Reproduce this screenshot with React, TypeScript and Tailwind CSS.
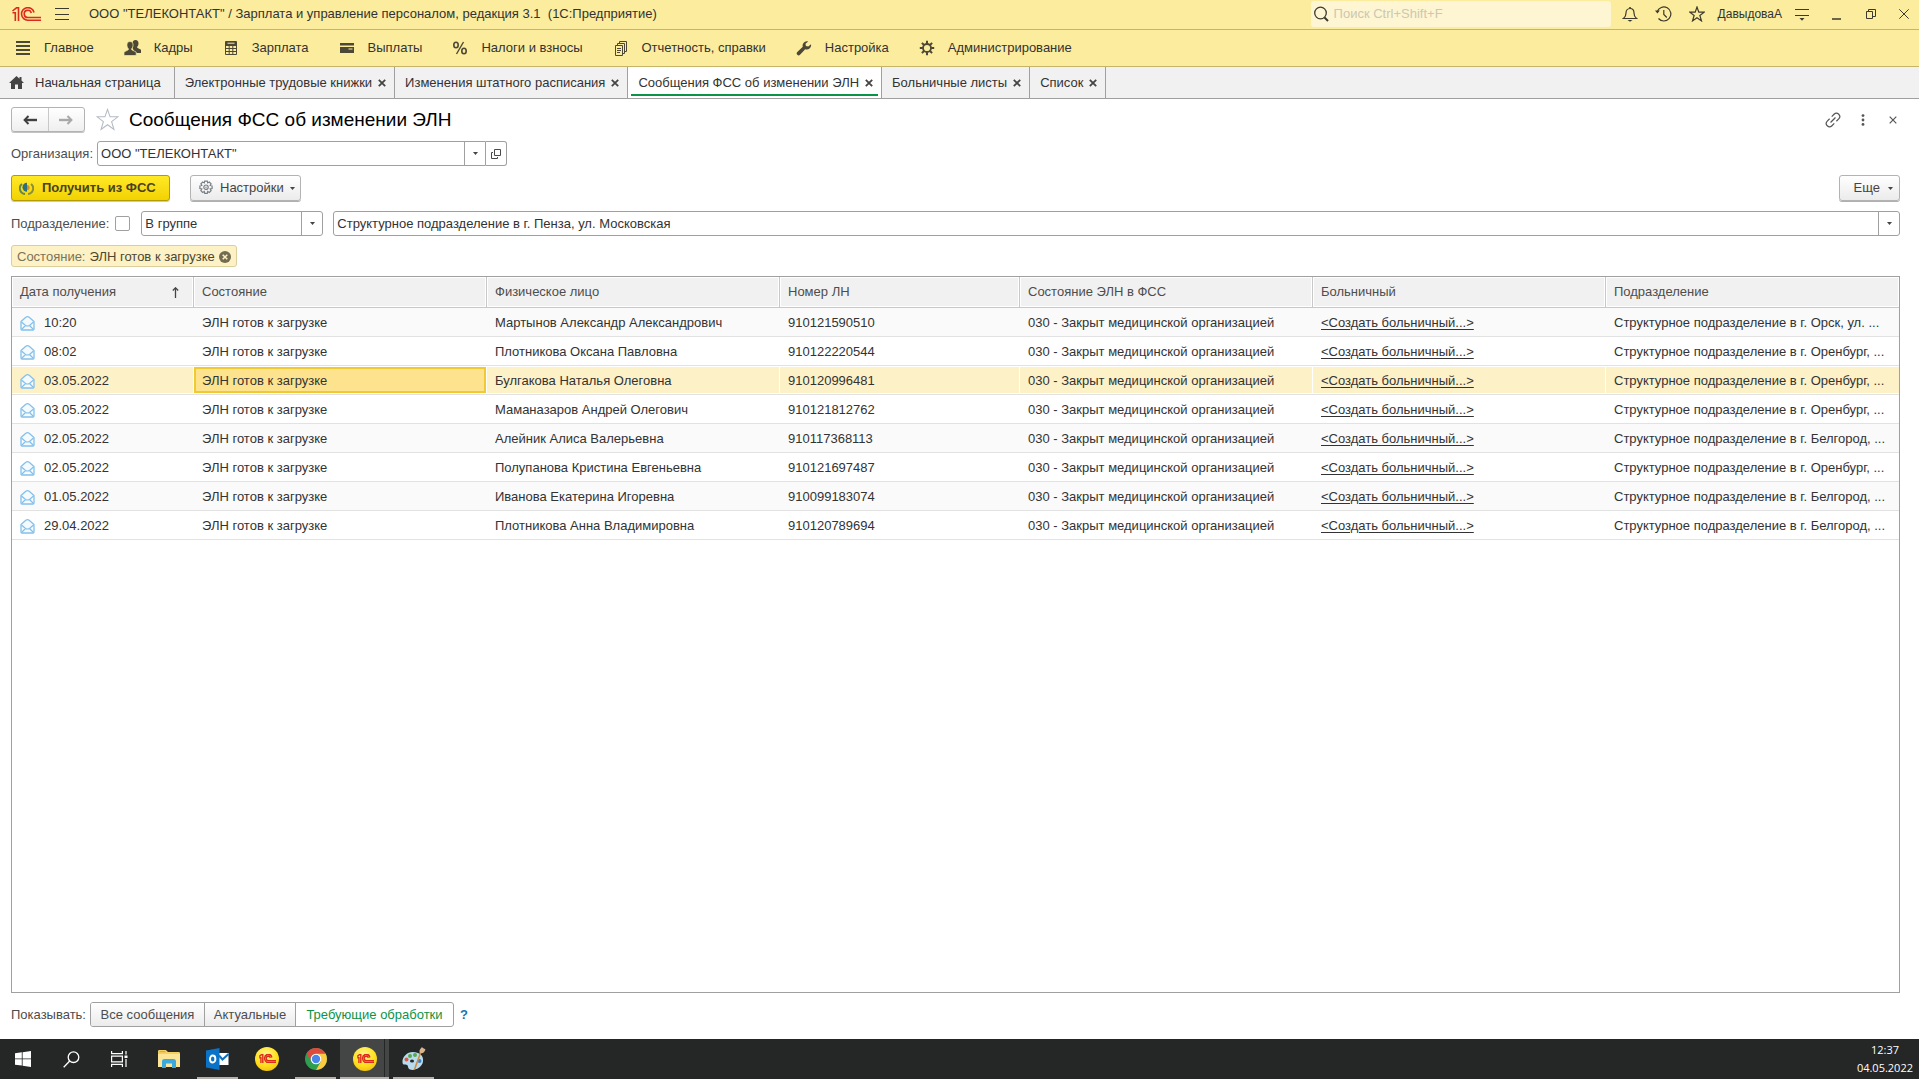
import type { ReactNode } from "react";

type Tab = { title: string; active?: boolean; home?: boolean };

const sections: { title: string; icon: ReactNode }[] = [
  { title: "Главное", icon: <MainIcon /> },
  { title: "Кадры", icon: <PeopleIcon /> },
  { title: "Зарплата", icon: <CalcIcon /> },
  { title: "Выплаты", icon: <CardIcon /> },
  { title: "Налоги и взносы", icon: <PercentIcon /> },
  { title: "Отчетность, справки", icon: <ReportsIcon /> },
  { title: "Настройка", icon: <WrenchIcon /> },
  { title: "Администрирование", icon: <CogIcon /> },
];

const tabs: Tab[] = [
  { title: "Начальная страница", home: true },
  { title: "Электронные трудовые книжки" },
  { title: "Изменения штатного расписания" },
  { title: "Сообщения ФСС об изменении ЭЛН", active: true },
  { title: "Больничные листы" },
  { title: "Список" },
];

const rows = [
  { date: "10:20", person: "Мартынов Александр Александрович", number: "910121590510", dept: "Структурное подразделение в г. Орск, ул. ..." },
  { date: "08:02", person: "Плотникова Оксана Павловна", number: "910122220544", dept: "Структурное подразделение в г. Оренбург, ..." },
  { date: "03.05.2022", person: "Булгакова Наталья Олеговна", number: "910120996481", dept: "Структурное подразделение в г. Оренбург, ...", selected: true },
  { date: "03.05.2022", person: "Маманазаров Андрей Олегович", number: "910121812762", dept: "Структурное подразделение в г. Оренбург, ..." },
  { date: "02.05.2022", person: "Алейник Алиса Валерьевна", number: "910117368113", dept: "Структурное подразделение в г. Белгород, ..." },
  { date: "02.05.2022", person: "Полупанова Кристина Евгеньевна", number: "910121697487", dept: "Структурное подразделение в г. Оренбург, ..." },
  { date: "01.05.2022", person: "Иванова Екатерина Игоревна", number: "910099183074", dept: "Структурное подразделение в г. Белгород, ..." },
  { date: "29.04.2022", person: "Плотникова Анна Владимировна", number: "910120789694", dept: "Структурное подразделение в г. Белгород, ..." },
];

const columns = ["Состояние", "Физическое лицо", "Номер ЛН", "Состояние ЭЛН в ФСС", "Больничный", "Подразделение"];

export default function App() {
  return (
    <div className="flex min-h-screen flex-col bg-white font-['Liberation_Sans',Arial,sans-serif] text-[13px] leading-4 text-[#333]">
      <TitleBar />
      <SectionBar />
      <TabBar />
      <main className="flex flex-1 flex-col gap-[9px] pt-2 pr-[19px] pb-3 pl-[11px]">
        <FormHeader />

        <div className="flex h-[25px] items-center gap-1">
          <label htmlFor="org" className="text-[#4d4d4d]">Организация:</label>
          <div className="flex h-full w-[410px]">
            <Combo id="org" value={'ООО "ТЕЛЕКОНТАКТ"'} className="flex-1 rounded-l-[3px]" />
            <button aria-label="Открыть" className="flex w-[21px] items-center justify-center rounded-r-[3px] border border-l-0 border-[#a0a0a0]">
              <svg width="10" height="10" viewBox="0 0 10 10" fill="none" stroke="#4a4a4a">
                <path d="M3.500 .5h6v6h-6z" />
                <path d="M2 3.500H.5v6h6V8" />
              </svg>
            </button>
          </div>
        </div>

        {/* Command bar */}
        <div className="flex h-[27px] items-start">
          <button className="flex h-[26px] w-[159px] items-center gap-2 rounded-[3px] border border-[#b39b00] bg-gradient-to-b from-[#ffe924] to-[#f2d200] pl-[7px] font-bold text-[#4a4220] shadow-[0_1px_0_#c9c9c9]">
            <FssIcon />
            Получить из ФСС
          </button>
          <button className="ml-5 flex h-[26px] w-[111px] items-center gap-[6px] rounded-[3px] border border-[#b3b3b3] bg-gradient-to-b from-white to-[#ebebeb] pl-[7px] text-[#444] shadow-[0_1px_0_#b0b0b0]">
            <SettingsIcon />
            Настройки
            <Caret />
          </button>
          <button className="ml-auto flex h-[26px] w-[61px] items-center justify-end gap-2 rounded-[3px] border border-[#b3b3b3] bg-gradient-to-b from-white to-[#ebebeb] pr-[6px] text-[#444] shadow-[0_1px_0_#b0b0b0]">
            Еще
            <Caret />
          </button>
        </div>

        {/* Department filter */}
        <div className="flex h-[25px] items-center">
          <label htmlFor="use-dept" className="text-[#4d4d4d]">Подразделение:</label>
          <input id="use-dept" type="checkbox" className="ml-[6px] size-[15px] appearance-none rounded-[2px] border border-[#a0a0a0] bg-white" />
          <Combo id="dept-mode" label="Вид сравнения" value="В группе" className="ml-[11px] w-[182px] rounded-[3px]" />
          <Combo id="dept" label="Подразделение" value="Структурное подразделение в г. Пенза, ул. Московская" className="ml-[10px] flex-1 rounded-[3px]" />
        </div>

        <div className="flex">
          <div className="flex h-[22px] items-center gap-1 rounded-[3px] border border-[#dccf9c] bg-[#fdf1c6] px-[5px] pt-px">
            <span className="text-[#7b7356]">Состояние:</span>
            <span className="text-[#4d472f]">ЭЛН готов к загрузке</span>
            <button aria-label="Снять отбор">
              <svg width="12" height="12" viewBox="0 0 12 12">
                <circle cx="6" cy="6" r="6" fill="#746c51" />
                <path d="M3.700 3.700l4.600 4.600M8.300 3.700l-4.600 4.600" stroke="#fdf1c6" strokeWidth="1.500" />
              </svg>
            </button>
          </div>
        </div>

        <MessageTable />
        <ShowFilter />
      </main>
      <Taskbar />
    </div>
  );
}

function TitleBar() {
  return (
    <header className="flex h-[30px] items-center border-b border-[#c3b66b] bg-[#fbec9e] pr-[10px] pb-px pl-3">
      <Logo className="h-[14px] w-[29px]" />
      <button aria-label="Меню функций" className="ml-[14px]">
        <svg width="14" height="12" viewBox="0 0 14 12" stroke="#3c3a2c">
          <path d="M0 .5h14M0 6.500h14M0 11.500h14" />
        </svg>
      </button>
      <h1 className="ml-5 whitespace-pre">ООО "ТЕЛЕКОНТАКТ" / Зарплата и управление персоналом, редакция 3.1  (1С:Предприятие)</h1>
      <div className="ml-auto flex h-[26px] w-[300px] items-center gap-[5px] rounded-[3px] bg-[#fef6d3] pl-[3px]">
        <svg width="15" height="16" viewBox="0 0 15 16" fill="none" stroke="#3c3a2c">
          <circle cx="6.500" cy="7" r="5.800" strokeWidth="1.300" />
          <path d="M10.500 11.500l3.500 3.500" strokeWidth="2" />
        </svg>
        <input type="search" aria-label="Поиск" placeholder="Поиск Ctrl+Shift+F" className="min-w-0 flex-1 bg-transparent outline-none placeholder:text-[#cdc7b0]" />
      </div>
      <button aria-label="Уведомления" className="ml-[11px]">
        <svg width="16" height="16" viewBox="0 0 16 16" fill="none" stroke="#3c3a2c" strokeWidth="1.200">
          <path d="M1.500 12.500c2-1.500 2.500-3 2.500-5.500 0-2.500 1.500-4.500 4-4.500s4 2 4 4.500c0 2.500.5 4 2.500 5.500z" />
          <path d="M7.200 1.500h1.600" />
          <path d="M5.500 14h5L8 15.800z" fill="#3c3a2c" stroke="none" />
        </svg>
      </button>
      <button aria-label="История" className="ml-[17px]">
        <svg width="17" height="16" viewBox="0 0 17 16" fill="none" stroke="#3c3a2c" strokeWidth="1.200">
          <path d="M2.200 5.800A7 7 0 1 1 3.500 12.500" />
          <path d="M0 4.500h4.800L2.400 7.500z" fill="#3c3a2c" stroke="none" />
          <path d="M8.800 4v4.500l3 3" />
        </svg>
      </button>
      <button aria-label="Избранное" className="ml-[17px]">
        <StarIcon size={16} color="#3c3a2c" />
      </button>
      <a href="#user" className="ml-[13px] text-xs">ДавыдоваА</a>
      <button aria-label="Настройка окна" className="ml-[13px]">
        <svg width="14" height="13" viewBox="0 0 14 13" fill="none" stroke="#3c3a2c">
          <path d="M0 1.500h14M0 7.500h14" />
          <path d="M4.500 10h5L7 12.800z" fill="#3c3a2c" stroke="none" />
        </svg>
      </button>
      <button aria-label="Свернуть" className="ml-[23px]">
        <svg width="9" height="11" viewBox="0 0 9 11" stroke="#3c3a2c">
          <path d="M0 10h9" strokeWidth="1.500" />
        </svg>
      </button>
      <button aria-label="Восстановить" className="ml-[25px]">
        <svg width="10" height="10" viewBox="0 0 10 10" fill="none" stroke="#3c3a2c">
          <path d="M.5 2.500h6v7h-6z" />
          <path d="M2.500 2.500v-2h7v7h-3" />
        </svg>
      </button>
      <button aria-label="Закрыть программу" className="ml-[23px]">
        <svg width="10" height="10" viewBox="0 0 10 10" stroke="#3c3a2c">
          <path d="M.3 .3l9.400 9.400M9.700 .3l-9.400 9.400" />
        </svg>
      </button>
    </header>
  );
}

function SectionBar() {
  return (
    <nav className="flex h-[37px] items-center gap-[30px] border-b border-[#c3b66b] bg-[#fbec9e] pl-[15px]">
      {sections.map((s) => (
        <a key={s.title} href="#section" className="flex items-center gap-[13px]">
          {s.icon}
          {s.title}
        </a>
      ))}
    </nav>
  );
}

function TabBar() {
  return (
    <nav className="flex h-8 border-b border-[#a0a0a0] bg-[#f1f1f1]">
      {tabs.map((tab) => (
        <div
          key={tab.title}
          className={`relative flex items-center border-r border-[#a0a0a0] ${tab.active ? "bg-white" : ""} ${tab.home ? "gap-[11px] pr-[13px] pl-[9px]" : "gap-[6px] pr-2 pl-[10px]"}`}
        >
          {tab.home && (
            <svg width="15" height="13" viewBox="0 0 15 13" fill="#444">
              <path d="M7.500 0L0 7h2v6h4V8.500h3V13h4V7h2L12.500 4.600V1h-2v1.800z" />
            </svg>
          )}
          <a href="#tab">{tab.title}</a>
          {!tab.home && (
            <button aria-label="Закрыть вкладку">
              <svg width="8" height="8" viewBox="0 0 8 8" stroke="#444" strokeWidth="1.800">
                <path d="M.8 .8l6.400 6.400M7.200 .8L.8 7.200" />
              </svg>
            </button>
          )}
          {tab.active && <span className="absolute inset-x-[3px] bottom-[2px] h-[2px] bg-[#0b9447]" />}
        </div>
      ))}
    </nav>
  );
}

function FormHeader() {
  return (
    <div className="flex h-[25px] items-center">
      <div className="flex h-[25px] w-[74px] rounded-[3px] border border-[#b3b3b3] bg-gradient-to-b from-white to-[#efefef] shadow-[0_1px_0_#c4c4c4]">
        <button aria-label="Назад" className="flex flex-1 items-center justify-center border-r border-[#c8c8c8]">
          <ArrowIcon className="text-[#404040]" />
        </button>
        <button aria-label="Вперед" className="flex flex-1 items-center justify-center">
          <ArrowIcon className="rotate-180 text-[#a8a8a8]" />
        </button>
      </div>
      <button aria-label="Добавить в избранное" className="ml-[11px]">
        <StarIcon size={23} color="#b3bac2" />
      </button>
      <h2 className="ml-[10px] text-[19px] leading-6 text-black">Сообщения ФСС об изменении ЭЛН</h2>
      <button aria-label="Получить ссылку" className="ml-auto">
        <svg width="16" height="16" viewBox="0 0 16 16" fill="none" stroke="#555" strokeWidth="1.200">
          <g transform="rotate(-45 8 8)">
            <path d="M6.500 4.700H3.200a3.300 3.300 0 0 0 0 6.600h3.300" />
            <path d="M9.500 4.700h3.300a3.300 3.300 0 0 1 0 6.600H9.500" />
            <path d="M4.500 8h7" />
          </g>
        </svg>
      </button>
      <button aria-label="Еще действия" className="ml-5">
        <svg width="4" height="12" viewBox="0 0 4 12" fill="#555">
          <circle cx="2" cy="1.600" r="1.400" />
          <circle cx="2" cy="6" r="1.400" />
          <circle cx="2" cy="10.400" r="1.400" />
        </svg>
      </button>
      <button aria-label="Закрыть" className="mr-[3px] ml-6">
        <svg width="8" height="8" viewBox="0 0 8 8" stroke="#555" strokeWidth="1.200">
          <path d="M.7 .7l6.600 6.600M7.300 .7L.7 7.300" />
        </svg>
      </button>
    </div>
  );
}

function Combo({ id, label, value, className }: { id: string; label?: string; value: string; className: string }) {
  return (
    <div className={`relative flex h-[25px] border border-[#a0a0a0] bg-white ${className}`}>
      <select id={id} aria-label={label} className="w-full appearance-none bg-transparent pl-[3px] outline-none">
        <option>{value}</option>
      </select>
      <span className="pointer-events-none absolute inset-y-0 right-0 flex w-[21px] items-center justify-center border-l border-[#a0a0a0]">
        <Caret />
      </span>
    </div>
  );
}

function MessageTable() {
  return (
    <div className="flex-1 border border-[#a0a0a0]">
      <table className="w-full table-fixed border-separate border-spacing-0 text-left">
        <colgroup>
          <col className="w-[182px]" />
          <col />
          <col />
          <col className="w-[240px]" />
          <col />
          <col />
          <col />
        </colgroup>
        <thead>
          <tr className="text-[#4d4d4d]">
            <th className="h-[31px] border-r border-b border-[#c8c8c8] p-px font-normal">
              <div className="flex h-7 items-center justify-between bg-[#f1f1f1] pr-[13px] pl-[7px]">
                Дата получения
                <svg width="7" height="11" viewBox="0 0 7 11" fill="none" stroke="#444">
                  <path d="M3.500 11V1" strokeWidth="1.300" />
                  <path d="M.8 3.500L3.500 .8l2.700 2.700" strokeWidth="1.300" />
                </svg>
              </div>
            </th>
            {columns.map((c) => (
              <th key={c} className="h-[31px] border-r border-b border-[#c8c8c8] p-px font-normal last:border-r-0">
                <div className="flex h-7 items-center bg-[#f1f1f1] pl-[7px]">{c}</div>
              </th>
            ))}
          </tr>
        </thead>
        <tbody>
          {rows.map((row, i) => {
            const fill = row.selected ? "bg-[#fdf1c8]" : i % 2 === 0 ? "bg-[#fafafa]" : "bg-white";
            const td = `h-[29px] border-b border-[#e2e2e2] p-0 ${row.selected ? "py-px pr-px last:pr-0" : ""}`;
            const cell = `flex items-center pt-[2px] pr-1 pl-2 whitespace-nowrap ${row.selected ? "h-[26px]" : "h-7"}`;
            return (
              <tr key={row.number}>
                <td className={td}>
                  <div className={`${cell} ${fill} gap-[9px]`}>
                    <MailIcon />
                    {row.date}
                  </div>
                </td>
                <td className={td}>
                  {row.selected ? (
                    <div className="flex h-[26px] items-center border-2 border-[#f1c933] bg-[#fde38d] px-[6px] pt-[2px]">ЭЛН готов к загрузке</div>
                  ) : (
                    <div className={`${cell} ${fill}`}>ЭЛН готов к загрузке</div>
                  )}
                </td>
                <td className={td}>
                  <div className={`${cell} ${fill}`}>{row.person}</div>
                </td>
                <td className={td}>
                  <div className={`${cell} ${fill}`}>{row.number}</div>
                </td>
                <td className={td}>
                  <div className={`${cell} ${fill}`}>030 - Закрыт медицинской организацией</div>
                </td>
                <td className={td}>
                  <div className={`${cell} ${fill}`}>
                    <a href="#create" className="underline underline-offset-2">&lt;Создать больничный...&gt;</a>
                  </div>
                </td>
                <td className={td}>
                  <div className={`${cell} ${fill}`}>
                    <span className="truncate">{row.dept}</span>
                  </div>
                </td>
              </tr>
            );
          })}
        </tbody>
      </table>
    </div>
  );
}

function ShowFilter() {
  const segment =
    "relative flex items-center justify-center border-r border-[#a0a0a0] bg-gradient-to-b from-white to-[#ebebeb] text-[#4d4d4d] last:border-r-0 has-checked:bg-none has-checked:text-[#0b9447]";
  return (
    <div className="flex h-[25px] items-center">
      <span id="show-label" className="text-[#4d4d4d]">Показывать:</span>
      <div role="radiogroup" aria-labelledby="show-label" className="ml-1 flex h-full overflow-hidden rounded-[3px] border border-[#a0a0a0]">
        <label className={`${segment} w-[114px]`}>
          <input type="radio" name="show" className="sr-only" />
          Все сообщения
        </label>
        <label className={`${segment} w-[91px]`}>
          <input type="radio" name="show" className="sr-only" />
          Актуальные
        </label>
        <label className={`${segment} w-[157px]`}>
          <input type="radio" name="show" defaultChecked className="sr-only" />
          Требующие обработки
        </label>
      </div>
      <a href="#help" className="ml-[6px] font-bold text-[#1b74a8]">?</a>
    </div>
  );
}

function TaskButton({ label, state, children }: { label: string; state?: "open" | "active"; children: ReactNode }) {
  return (
    <button
      aria-label={label}
      className={`relative flex h-10 w-[49px] items-center justify-center ${state === "active" ? "bg-[#444545]" : ""}`}
    >
      {children}
      {state === "open" && <span className="absolute inset-x-1 bottom-0 h-[2px] bg-[#b5b0ac]" />}
      {state === "active" && (
        <>
          <span className="absolute inset-y-0 right-1 w-px bg-[#252626]" />
          <span className="absolute inset-x-0 bottom-0 h-[2px] bg-[#b5b0ac]" />
        </>
      )}
    </button>
  );
}

function Taskbar() {
  const button = "flex h-10 w-12 items-center justify-center pr-[2px]";
  return (
    <footer className="flex h-10 items-center bg-[#252626] text-white">
      <button aria-label="Пуск" className={button}>
        <svg width="16" height="16" viewBox="0 0 16 16" fill="#fff">
          <path d="M0 2.200l6.800-.9v6.200H0zM7.600 1.200L16 0v7.500H7.600zM0 8.300h6.800v6.300L0 13.700zM7.600 8.300H16V16l-8.400-1.200z" />
        </svg>
      </button>
      <button aria-label="Поиск в системе" className={button}>
        <svg width="17" height="17" viewBox="0 0 17 17" fill="none" stroke="#fff" strokeWidth="1.300">
          <circle cx="10.500" cy="6.200" r="5.300" />
          <path d="M6.700 10L.7 16.200" />
        </svg>
      </button>
      <button aria-label="Представление задач" className={button}>
        <svg width="17" height="16" viewBox="0 0 17 16" fill="none" stroke="#fff" strokeWidth="1.200">
          <path d="M.6 0v2.600h10.800V0M.6 16v-2.600h10.800V16M.6 5.200h10.800v5.600H.6zM15 0v3.500M15 8v8" />
          <path d="M13.500 4.500H16.500v2.500H13.500z" fill="#fff" stroke="none" />
        </svg>
      </button>
      <TaskButton label="Проводник">
        <svg width="22" height="18" viewBox="0 0 22 18">
          <path d="M0 1.200Q0 0 1.200 0h6.600L10 2h10.800q1.200 0 1.200 1.200V17H0z" fill="#f5cf62" />
          <path d="M0 4h22v13H0z" fill="#fde597" />
          <path d="M1.500 1h6v1.200h-6z" fill="#e4a93a" />
          <path d="M4 18v-6.500Q4 9 6.500 9h9q2.500 0 2.500 2.500V18h-4v-4.500H8V18z" fill="#3ba9dd" />
        </svg>
      </TaskButton>
      <TaskButton label="Outlook" state="open">
        <svg width="23" height="22" viewBox="0 0 23 22">
          <path d="M12 5h10.500v12H12z" fill="#fff" />
          <path d="M13 7.500l3.500 4L22.500 6" fill="none" stroke="#0f6fc0" strokeWidth="2" />
          <path d="M0 2.500L13.500 0v22L0 19.500z" fill="#0a72c7" />
          <ellipse cx="6.700" cy="11" rx="2.700" ry="3.500" fill="none" stroke="#fff" strokeWidth="1.900" />
        </svg>
      </TaskButton>
      <TaskButton label="1С">
        <OneCBall />
      </TaskButton>
      <TaskButton label="Chrome" state="open">
        <svg width="22" height="22" viewBox="0 0 22 22">
          <circle cx="11" cy="11" r="11" fill="#2e9e4f" />
          <path d="M11 5.500h9.500A11 11 0 0 1 11 22l4.800-8.500z" fill="#fccb3f" />
          <path d="M1.500 5.500A11 11 0 0 1 20.500 5.500H11a5.500 5.500 0 0 0-4.800 8.200z" fill="#dd4b3e" />
          <circle cx="11" cy="11" r="5.300" fill="#fff" />
          <circle cx="11" cy="11" r="4.200" fill="#4a86ec" />
        </svg>
      </TaskButton>
      <TaskButton label="1С, активное окно" state="active">
        <OneCBall />
      </TaskButton>
      <TaskButton label="Paint" state="open">
        <svg width="24" height="24" viewBox="0 0 24 24">
          <path d="M11 5C5 5 0 10 .5 15.500c.3 3 3 2 4.500 2.500 1.500.7.500 3.500 3 4.500 4 1.500 12-1.500 13-8C22 8.500 17 5 11 5z" fill="#b9dbee" />
          <ellipse cx="10" cy="14" rx="2" ry="1.500" fill="#252626" />
          <circle cx="4.500" cy="12.500" r="2" fill="#e2583e" />
          <circle cx="8" cy="9" r="2" fill="#57a84c" />
          <circle cx="13" cy="8" r="2" fill="#57a84c" />
          <circle cx="17.500" cy="14" r="2" fill="#3e7fd0" />
          <path d="M19.500 5.500L13.500 22l-1.500 1 .2-2L18 5z" fill="#d28b3d" />
          <path d="M17.500 5.500C17 3 18.500 1.500 20 0c.5 1.500 2 1 3.500 2.500-1 2.500-2 3.500-4 3.800z" fill="#d9b58c" />
        </svg>
      </TaskButton>
      <div className="ml-auto pr-[6px] text-center font-['Open_Sans','Noto_Sans',sans-serif] text-[11px] leading-[18px]">
        <div>12:37</div>
        <div>04.05.2022</div>
      </div>
    </footer>
  );
}

function OneCBall() {
  return (
    <svg width="24" height="24" viewBox="0 0 24 24">
      <defs>
        <radialGradient id="ball" cx=".45" cy=".3" r=".75">
          <stop offset="0" stopColor="#fff58a" />
          <stop offset=".6" stopColor="#ffe11f" />
          <stop offset="1" stopColor="#f2bd0c" />
        </radialGradient>
      </defs>
      <circle cx="12" cy="12" r="12" fill="url(#ball)" />
      <svg x="4" y="7" width="17" height="9" viewBox="0 0 29 14" preserveAspectRatio="none">
        <LogoShape width={2.4} />
      </svg>
    </svg>
  );
}

function Logo({ className }: { className: string }) {
  return (
    <svg className={className} viewBox="0 0 29 14" role="img" aria-label="1С">
      <LogoShape width={1.6} />
    </svg>
  );
}

function LogoShape({ width }: { width: number }) {
  return (
    <g fill="none" stroke="#dc2a1e" strokeWidth={width}>
      <path d="M.5 4L4.500 .8h2V14M.5 5.800h2.800V14" />
      <path d="M22 5.500A6.300 6.300 0 1 0 16 13.200h13" />
      <path d="M19.300 6A3.600 3.600 0 1 0 16 10.500h13" />
    </g>
  );
}

function Caret() {
  return (
    <svg width="5" height="3" viewBox="0 0 5 3" fill="#444">
      <path d="M0 0h5L2.500 3z" />
    </svg>
  );
}

function ArrowIcon({ className }: { className: string }) {
  return (
    <svg className={className} width="14" height="10" viewBox="0 0 14 10" fill="none" stroke="currentColor" strokeWidth="2">
      <path d="M2 5h12" strokeWidth="2.400" />
      <path d="M5.500 1L1.600 5l3.900 4" />
    </svg>
  );
}

function StarIcon({ size, color }: { size: number; color: string }) {
  return (
    <svg width={size} height={size} viewBox="0 0 24 24" fill="none" stroke={color} strokeWidth={size > 20 ? 1.1 : 1.8}>
      <path d="M12 1.500l2.700 7.700h8.100l-6.500 5 2.400 8.100L12 17.500l-6.700 4.800 2.400-8.100-6.500-5h8.100z" />
    </svg>
  );
}

function MailIcon() {
  return (
    <svg width="15" height="15" viewBox="0 0 15 15" fill="none" stroke="#84c0ea" className="shrink-0">
      <path d="M1 5.500L5.800 1.200q1.700-1 3.400 0L14 5.500v7.500q0 1-1 1H2q-1 0-1-1z" fill="#f4fafe" strokeWidth="1.300" />
      <path d="M1.500 6L5.500 9.500q2 1 4 0L13.500 6M1.500 13.500l4-4M13.500 13.500l-4-4" strokeWidth="1.200" />
    </svg>
  );
}

function FssIcon() {
  return (
    <svg width="15" height="13" viewBox="0 0 15 13" fill="none">
      <path d="M3 2A5.600 5.600 0 0 0 6 12" stroke="#66864a" strokeWidth="2" />
      <path d="M12 2A5.600 5.600 0 0 1 9 12" stroke="#8a8f3a" strokeWidth="2" />
      <path d="M8 .8a4.500 4.500 0 0 0 0 9z" fill="#2d6f7d" />
      <path d="M8 3a2.600 2.600 0 0 1 0 5.200z" fill="#d98b2b" />
    </svg>
  );
}

function SettingsIcon() {
  return (
    <svg width="16" height="16" viewBox="0 0 16 16" fill="none" stroke="#7a8087" strokeWidth="1.200">
      <path d="M6.700 1.200h2.600l.4 1.700 1.600-.9 1.800 1.800-.9 1.600 1.900.5v2.600l-1.900.4.9 1.700-1.800 1.800-1.600-.9-.4 1.800H6.700l-.4-1.800-1.600.9-1.800-1.800.9-1.700-1.900-.4V5.900l1.900-.5-.9-1.600L4.700 2l1.600.9z" />
      <circle cx="8" cy="7.200" r="2.200" />
      <circle cx="8" cy="7.200" r=".7" fill="#7a8087" stroke="none" />
    </svg>
  );
}

function MainIcon() {
  return (
    <svg width="16" height="16" viewBox="0 0 16 16" stroke="#4d4836" strokeWidth="2">
      <path d="M1 2h14M1 6h14M1 10h14M1 14h14" />
    </svg>
  );
}

function PeopleIcon() {
  return (
    <svg width="17" height="16" viewBox="0 0 17 16" fill="#4d4836">
      <path d="M11.500 0C13.500 0 14.500 1.500 14.500 3.500c0 1.500-.6 2.600-1.300 3.300v1l3.800 2V13h-6L8.500 8V3.500C8.500 1.500 9.500 0 11.500 0z" />
      <path d="M6 1.500c2 0 3.100 1.500 3.100 3.600 0 1.600-.6 2.800-1.400 3.500v1.200l4.500 2.200V15.500H0V12l4.300-2.200V8.600C3.500 7.900 2.900 6.700 2.900 5.100 2.900 3 4 1.500 6 1.500z" stroke="#fbec9e" strokeWidth=".7" />
    </svg>
  );
}

function CalcIcon() {
  return (
    <svg width="16" height="16" viewBox="0 0 16 16" fill="none" stroke="#4d4836">
      <path d="M2.500 1.500h11v13h-11z" />
      <path d="M3 2h10v3.500H3z" fill="#4d4836" />
      <path d="M3 8.500h10M3 11.500h10M6.200 5v9M9.800 5v9" />
      <path d="M4.500 3.200h7" stroke="#fbec9e" />
    </svg>
  );
}

function CardIcon() {
  return (
    <svg width="16" height="16" viewBox="0 0 16 16" fill="#4d4836">
      <path d="M1 3h14v2.500H1zM1 7h14v6H1z" />
      <path d="M9.500 9h4" stroke="#fbec9e" />
    </svg>
  );
}

function PercentIcon() {
  return (
    <svg width="16" height="16" viewBox="0 0 16 16" fill="none" stroke="#4d4836" strokeWidth="1.600">
      <ellipse cx="4" cy="5" rx="2.200" ry="2.700" />
      <ellipse cx="12" cy="11" rx="2.200" ry="2.700" />
      <path d="M11.500 2L4.500 14" strokeWidth="1.400" />
    </svg>
  );
}

function ReportsIcon() {
  return (
    <svg width="16" height="16" viewBox="0 0 16 16" fill="none" stroke="#4d4836">
      <path d="M2.500 5.500h7v10h-7z" />
      <path d="M4.500 5V3.500h7v10H10M6.500 3V1.500h7v10H12" />
      <path d="M4 8.500h4M4 10.500h4M4 12.500h3" />
    </svg>
  );
}

function WrenchIcon() {
  return (
    <svg width="16" height="16" viewBox="0 0 16 16" fill="#4d4836">
      <path d="M11 1.200a4.300 4.300 0 0 0-4.200 5.600L1.300 12a1.900 1.900 0 0 0 2.700 2.700l5.200-5.500A4.300 4.300 0 0 0 15 4.300L12.300 6.500l-2.400-.6-.4-2.200L12.200 1.400z" />
    </svg>
  );
}

function CogIcon() {
  return (
    <svg width="16" height="16" viewBox="0 0 16 16" fill="none" stroke="#4d4836">
      <circle cx="8" cy="8" r="4" strokeWidth="1.800" />
      <path d="M8 .8v3M8 12.200v3M.8 8h3M12.200 8h3M2.900 2.900L5 5M11 11l2.100 2.100M2.900 13.100L5 11M11 5l2.100-2.100" strokeWidth="2" />
    </svg>
  );
}
